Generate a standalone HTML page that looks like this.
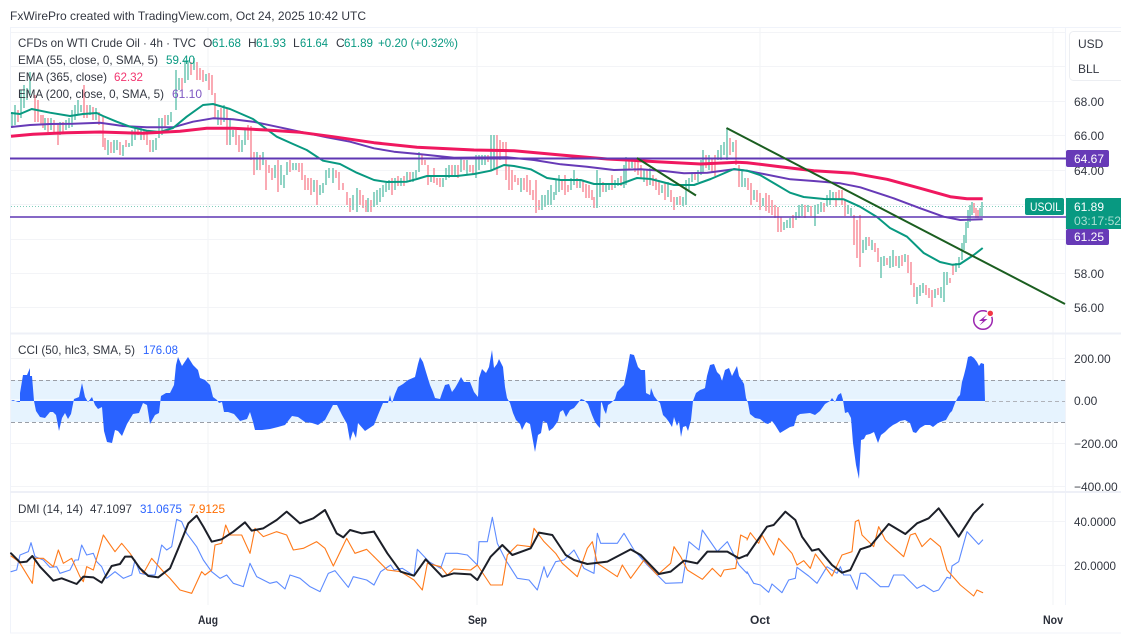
<!DOCTYPE html>
<html><head><meta charset="utf-8"><title>WTI Crude Oil chart</title>
<style>
html,body{margin:0;padding:0;background:#fff}
svg{display:block}
text{font-family:"Liberation Sans",sans-serif;font-size:12px;fill:#333741}
.n{vector-effect:non-scaling-stroke;fill:none;stroke-linejoin:round;stroke-linecap:round}
</style></head><body>
<svg width="1121" height="635" viewBox="0 0 1121 635" xmlns="http://www.w3.org/2000/svg">
<rect width="1121" height="635" fill="#fff"/>

<!-- grid -->
<path d="M208 27V605M477 27V605M760 27V605M1053 27V605" stroke="#f1f3f6" fill="none"/>
<path d="M11 32.5H1065M11 66.5H1065M11 101.5H1065M11 135.5H1065M11 170.5H1065M11 204.5H1065M11 239.5H1065M11 273.5H1065M11 307.5H1065M11 358.5H1065M11 443.5H1065M11 486.5H1065M11 521.5H1065M11 565.5H1065" stroke="#f3f4f7" fill="none"/>
<path d="M10.5 27V633M1065.5 27V605M10 27.5H1121M10 633H1121" stroke="#f0f3fa" fill="none"/>
<path d="M10 333.5H1121M10 492H1121" stroke="#eef0f7" stroke-width="2" fill="none"/>

<!-- CCI band -->
<rect x="11" y="380" width="1054" height="42" fill="#e6f3fe"/>
<path d="M11 380.5H1065M11 422.5H1065" stroke="#9a9ea6" stroke-dasharray="4 3" fill="none"/>
<path d="M985 401.5H1065" stroke="#b0b3ba" stroke-dasharray="4 3" fill="none"/>
<path d="M11 400H985" stroke="#fff" fill="none"/>
<!-- CCI histogram -->
<path fill="#2962ff" d="M11 401L13 400 18 402H20V393L23 375H27L30 368V376H32L34 401 36 411 40 417 45 418 50 412H53L56 415 59 431 62 418 65 413 68 419 71 414 74 399 79 397 82 383 85 397 88 402 92 397 95 405 98 409 102 407 104 431 107 442 112 443 115 430 118 431 122 436 127 424 133 414 139 413 143 403 147 405 150 424 155 415 159 413 161 396 166 393H170L174 385 176 365 178 357 182 366 188 357 193 365 198 370 200 378 205 380 210 385 213 397 217 400 219 403 222 402 224 412H228L234 414 240 421 247 419 250 412 253 422 255 430H262L270 429 278 427 285 425 292 416 298 417 305 422 312 423 318 425 325 420 333 405H337L342 415 347 424 350 441 353 431 356 438 358 423 365 431 374 425 378 415 383 403H388L390 395 392 403 395 394 398 387 403 384 408 380 415 377 418 364 420 357 423 362 426 372 430 385 433 392 435 398 440 399 442 393 445 385 449 384 452 392 455 388 459 381 461 377 464 382H470L474 392 478 397 479 378 482 369 486 373 489 367 492 350 494 368 497 364 499 359 503 367 505 387 507 398 510 403 513 413 516 420 520 424 522 430 526 422 530 424 533 441 535 452 538 435 541 433 543 421 547 423 549 431 553 428 558 421 560 412 563 410 566 417 570 410 574 408 578 403 581 399 584 400 588 404 592 415 595 422 598 426 600 428 601 402 602 403 604 410 606 414 608 405 611 403 615 399 617 392 620 389 624 385 627 371 630 354 634 355 638 367 641 370H645L646 393 650 395 651 388 654 396 657 400 660 403 663 415 666 418 669 422 672 427 674 417 677 426 679 421 681 437 683 427 686 426 688 431 691 420 693 401 696 393 700 390 703 389 705 388 707 376 710 365 714 364 717 372 720 375 722 381 725 370 729 368 732 376 735 370 737 366 739 376 741 379 744 384 746 398 748 403 750 414 755 418 760 419 765 423 768 424 772 421 775 425 780 433 785 430 790 427 794 426 797 416 800 414 810 413 815 415 820 411 825 404 830 401 832 398 835 402 838 395 841 393 843 400 845 413 848 412 851 418 853 443 856 465 859 479 861 440 864 439 866 435 870 434 874 432 878 443 881 435 885 432 889 428 893 425 897 423 900 421 905 420 910 423 913 432 916 433 920 428 925 425H930L933 427 938 423 943 421 946 420 950 413 952 411 955 403 958 397 960 395 962 382 964 375 966 367 968 357 971 356 974 358 977 362 979 366 981 363 984 364 985 401Z"/>

<!-- candles up -->
<path fill="none" stroke="#76cab7" stroke-width="1.6" d="M12 112V128M15 105V125M21 90V118M24 85V108M27 88V100M30 72V95M45 118V130M51 118V130M60 122V135M66 120V130M69 118V128M72 110V127M75 105V120M78 100V115M81 105V112M90 105V115M96 108V120M108 140V155M114 140V153M117 140V150M123 145V156M129 143V147M132 130V146M135 128V140M141 128V140M153 140V152M156 138V150M159 118V138M162 118V135M168 115V125M171 112V122M176 70V110M179 78V90M185 60V83M188 60V80M194 58V70M206 74V81M218 110V125M224 105V122M230 118V145M233 130V137M242 140V152M245 130V145M257 152V170M263 152V165M275 165V178M281 165V185M284 175V188M287 162V175M293 163V170M296 163V170M314 180V192M320 185V195M323 183V193M326 170V185M329 168V178M333 168V183M353 195V210M357 188V212M368 198V212M374 192V207M377 190V205M380 188V202M383 185V197M386 183V192M389 180V190M395 178V190M401 178V186M407 172V182M413 172V182M416 170V178M419 152V172M431 175V182M443 178V187M446 168V180M449 165V178M455 165V175M461 158V172M467 160V175M476 155V178M479 155V170M482 155V165M485 155V165M491 135V170M494 135V170M521 178V192M542 195V210M545 195V207M548 190V205M551 185V205M554 192V200M556 180V195M559 175V192M571 178V190M574 170V185M580 180V188M597 170V208M600 178V197M606 185V192M609 183V190M615 180V188M618 178V186M624 165V188M626 157V185M632 160V168M644 170V182M650 168V185M662 185V193M668 182V197M677 197V205M683 197V206M686 180V205M689 178V190M692 172V182M698 170V182M701 160V175M703 150V172M709 155V170M718 150V160M721 145V160M724 142V155M727 128V160M733 142V152M742 170V187M745 178V187M754 190V200M763 198V206M784 222V230M787 220V228M790 218V228M796 212V220M799 205V218M802 204V216M808 205V212M815 205V226M818 204V214M821 202V212M827 195V206M830 190V205M833 192V200M848 205V214M851 208V216M863 240V253M866 237V250M872 240V250M881 257V278M884 256V266M890 256V268M893 250V267M899 256V268M905 254V262M917 287V304M920 285V296M923 283V293M935 289V298M941 287V298M944 272V302M947 272V285M956 263V272M959 257V268M962 243V260M964 235V250M966 222V243M968 210V228M970 205V222M972 202V215M980 208V216M982 202V216"/>
<!-- candles down -->
<path fill="none" stroke="#f996a2" stroke-width="1.6" d="M18 110V122M35 95V122M38 100V122M41 115V125M43 115V128M48 118V132M54 120V133M58 123V145M63 122V132M84 85V118M87 105V118M93 107V120M99 112V125M103 117V147M105 138V150M111 142V153M120 142V155M126 140V147M138 128V135M144 130V140M147 130V145M150 140V152M165 115V128M182 78V90M191 62V75M197 62V80M200 68V80M203 70V82M209 73V90M212 75V95M215 93V118M221 108V125M227 108V145M236 130V145M239 135V152M248 125V140M251 126V160M254 152V175M260 155V170M266 160V190M269 165V173M272 168V180M278 160V192M290 160V172M299 163V172M302 163V180M305 175V190M308 178V190M311 178V195M317 180V205M336 170V178M339 172V190M343 183V190M347 192V205M350 198V212M360 190V205M363 195V208M366 200V212M371 200V212M392 178V195M398 176V186M404 176V186M410 172V182M422 155V165M425 160V165M428 165V185M434 168V183M437 178V185M440 178V187M452 165V177M458 165V178M464 160V170M470 165V172M473 165V175M488 155V162M497 135V175M500 140V160M503 142V150M506 142V180M509 165V190M512 170V190M515 175V182M518 178V185M524 178V190M527 175V192M530 180V195M533 190V200M536 180V213M539 200V210M562 180V190M565 175V195M568 185V192M577 178V188M583 180V192M586 184V198M589 185V198M592 190V200M594 197V208M603 182V192M612 175V190M621 176V186M629 160V170M635 160V172M638 160V175M641 165V178M647 170V186M653 175V186M656 178V190M659 180V195M665 182V200M671 190V202M674 197V210M680 196V205M695 174V180M706 155V168M712 158V172M715 155V176M730 138V155M736 140V165M739 165V187M748 178V190M751 183V205M757 190V202M760 193V210M766 193V211M769 195V213M772 200V215M775 205V218M778 207V232M781 217V232M793 215V228M805 205V218M811 206V216M824 203V212M836 192V207M839 190V200M842 190V205M845 200V216M854 215V245M857 220V258M860 215V267M869 237V246M875 243V252M878 248V262M887 258V265M896 256V266M902 255V266M908 255V273M911 262V285M914 283V297M926 285V295M929 288V298M932 290V307M938 288V295M950 278V283M953 265V275M974 203V213M976 208V218M978 210V218"/>

<!-- dotted last price -->
<path d="M11 206.5H1026" stroke="#7fcdbb" stroke-dasharray="1 2" fill="none"/>

<!-- EMAs -->
<polyline fill="none" stroke="#673ab7" stroke-width="2" stroke-linejoin="round" points="11,127 30,125 50,124 73,123.7 100,122.7 123,126 146.7,127.3 173,127.3 193,121.7 213,118.3 233,119.3 253,121.7 276.7,126.7 300,131.7 326.7,137.3 350,141.7 374,148.3 394,151.7 420.7,154.3 454,157.7 507,157.3 534,160 560.7,164.3 587,166.7 614,170 640.7,169.3 664,171 684,173.3 707.3,172.7 734,169.3 747,170.7 763.7,174 790.3,179.3 813.7,181 840.3,183.3 860.3,187.3 893.7,198.3 920.3,208.3 943.7,216.7 960.3,220 982.7,219.3"/>
<polyline fill="none" stroke="#089981" stroke-width="2" stroke-linejoin="round" points="11,113 20,114 31.7,109 50,112.7 70,116 83,114 96.7,113 103,116 116.7,121.7 130,126.7 146.7,130.7 160,132 173,128 186.7,116.7 203,105 213,104 230,109 253,119 276.7,136.7 293,144 306.7,150 323,160.7 340,164 356.7,172.7 374,180 387,182 407,181.7 417,179 427,176 457,176 474,174 490.7,170.7 504,165 514,166 530.7,169.3 547,178 560.7,180 580.7,180 594,184 620.7,184 637,178 650.7,179 674,185 694,185 710.7,179 734,169 747,170.7 760,175 777,185 790,192.7 803.7,197 824,199 843.7,199.3 860,206.7 877,217 890,228 907,236.7 923.7,253 940,262 952,264.7 960,264 973.7,255 982.7,248"/>
<polyline fill="none" stroke="#f0185f" stroke-width="3" stroke-linejoin="round" points="11,136.3 33,134.3 66.7,132.7 100,132 143,133.3 180,131.3 206.7,128.3 233,128.3 266.7,130 300,132.3 333,136.7 374,142.7 417,147.3 474,150 514,150.7 560.7,155 607.3,159 657,161.7 700.7,164 737.3,162.3 747,162.7 780,166.7 813.7,170.7 853.7,173.3 887,179.3 920.3,188.3 950.3,196.7 967,198.7 982.7,198.7"/>

<!-- horizontal levels -->
<path d="M10 158.5H1066" stroke="#5f37b3" stroke-width="2" fill="none"/>
<path d="M10 217H1066" stroke="#5f37b3" stroke-width="1.6" fill="none"/>
<!-- trendlines -->
<path d="M637 158L696 195.5M726.5 128L1065 304" stroke="#1b5e20" stroke-width="2" fill="none"/>

<!-- bolt icon -->
<circle cx="983" cy="320" r="9.3" fill="#fff" stroke="#9c27b0" stroke-width="1.5"/>
<path d="M987 314.5L979 321H983L979.5 325.5L987.5 319H983.5Z" fill="#9c27b0"/>
<circle cx="990.3" cy="313.3" r="3.8" fill="#fff"/><circle cx="990.3" cy="313.3" r="2.7" fill="#f23645"/>

<!-- DMI -->
<g transform="translate(0,490) scale(.33333)">
<polyline class="n" stroke="#5d8bff" stroke-width="1.1" points="33,245 50,240 60,195 85,185 93,158 105,200 130,210 150,232 170,230 180,250 210,240 225,210 235,210 245,165 260,195 280,190 290,215 305,230 320,265 345,245 370,265 395,255 405,210 420,250 445,255 465,255 485,165 500,180 515,170 530,88 545,95 560,130 590,170 610,210 635,245 660,265 680,255 700,280 730,290 750,220 770,260 810,280 830,275 855,297 870,255 900,265 930,290 960,305 985,250 1005,242 1045,292 1060,260 1100,270 1122,285"/>
<polyline class="n" stroke="#ff7a1a" stroke-width="1.1" points="33,198 50,210 60,220 97,280 105,205 130,205 160,230 175,180 190,220 215,205 240,260 250,275 260,230 280,240 310,135 345,185 365,160 390,190 430,250 455,205 490,245 510,265 540,300 575,310 605,245 615,255 635,240 645,165 665,160 677,105 690,135 725,135 750,190 765,115 790,140 830,125 860,135 880,180 910,175 950,155 975,175 1000,228 1040,145 1065,190 1100,178 1122,200"/>
<polyline class="n" stroke="#1c1f28" stroke-width="2" points="33,190 60,217 80,215 97,198 120,230 160,272 185,265 230,282 250,260 280,262 305,278 335,228 360,222 375,200 395,200 420,235 445,258 475,262 510,235 535,175 565,100 590,77 610,110 635,155 665,148 700,125 735,97 755,122 790,115 830,90 860,65 900,100 940,85 975,60 1010,130 1030,142 1050,120 1085,130 1122,125"/>
</g>
<g transform="translate(374,490) scale(.33333)">
<polyline class="n" stroke="#5d8bff" stroke-width="1.1" points="0,285 20,245 50,225 60,240 85,235 120,257 130,178 165,215 200,235 215,190 250,190 280,195 310,225 315,155 340,155 355,82 370,160 395,210 430,265 465,270 490,300 510,230 520,262 545,215 570,210 600,180 630,235 660,250 670,130 680,160 730,160 750,130 780,180 820,225 875,280 925,278 945,155 975,180 985,120 1030,185 1060,155 1095,225 1119,250"/>
<polyline class="n" stroke="#ff7a1a" stroke-width="1.1" points="0,200 40,240 80,245 120,270 145,300 160,220 200,230 220,255 240,237 290,240 310,225 350,285 385,285 400,195 430,165 470,170 480,115 510,155 545,190 565,220 610,260 640,175 655,155 670,220 730,260 745,225 770,265 810,210 850,255 890,220 900,170 920,200 940,240 985,268 1015,235 1040,260 1050,240 1085,235 1100,135 1119,145"/>
<polyline class="n" stroke="#1c1f28" stroke-width="2" points="0,125 40,190 80,245 120,257 155,208 205,260 240,250 290,253 310,270 350,200 385,165 415,195 470,175 495,128 535,135 575,195 600,210 640,222 700,215 770,178 800,195 855,252 890,245 930,212 970,220 1000,185 1060,185 1095,205 1119,195"/>
</g>
<g transform="translate(747,490) scale(.33333)">
<polyline class="n" stroke="#5d8bff" stroke-width="1.1" points="0,245 20,280 40,285 65,307 75,282 105,308 125,270 145,265 150,232 185,258 210,280 240,230 270,250 280,230 290,255 310,255 330,298 340,250 355,250 400,290 425,290 440,255 470,255 510,295 530,285 560,305 575,300 600,262 610,265 615,228 635,215 660,125 695,163 707,150"/>
<polyline class="n" stroke="#ff7a1a" stroke-width="1.1" points="0,150 10,128 35,160 45,135 80,195 95,145 135,190 150,225 170,212 190,235 205,192 255,258 285,195 315,185 325,95 335,90 345,135 380,170 395,110 415,150 470,200 490,135 505,130 525,170 550,145 580,170 600,240 640,285 680,318 690,300 707,308"/>
<polyline class="n" stroke="#1c1f28" stroke-width="2" points="0,197 60,110 80,105 115,65 145,90 165,140 195,182 215,177 255,225 285,248 310,240 340,178 370,168 425,102 475,132 510,100 545,85 575,55 600,90 635,140 680,70 707,43"/>
</g>

<!-- header -->
<text x="10" y="20" textLength="356" lengthAdjust="spacingAndGlyphs">FxWirePro created with TradingView.com, Oct 24, 2025 10:42 UTC</text>

<!-- legend -->
<text x="18" y="47" textLength="178" lengthAdjust="spacingAndGlyphs">CFDs on WTI Crude Oil · 4h · TVC</text>
<text x="203" y="47">O</text><text x="212" y="47" textLength="29" lengthAdjust="spacingAndGlyphs" style="fill:#089981">61.68</text>
<text x="248" y="47">H</text><text x="256" y="47" textLength="30" lengthAdjust="spacingAndGlyphs" style="fill:#089981">61.93</text>
<text x="293" y="47">L</text><text x="300" y="47" textLength="28" lengthAdjust="spacingAndGlyphs" style="fill:#089981">61.64</text>
<text x="336" y="47">C</text><text x="344" y="47" textLength="29" lengthAdjust="spacingAndGlyphs" style="fill:#089981">61.89</text>
<text x="378" y="47" textLength="80" lengthAdjust="spacingAndGlyphs" style="fill:#089981">+0.20 (+0.32%)</text>
<text x="18" y="64" textLength="140" lengthAdjust="spacingAndGlyphs">EMA (55, close, 0, SMA, 5)</text>
<text x="166" y="64" textLength="29" lengthAdjust="spacingAndGlyphs" style="fill:#089981">59.40</text>
<text x="18" y="81" textLength="89" lengthAdjust="spacingAndGlyphs">EMA (365, close)</text>
<text x="114" y="81" textLength="29" lengthAdjust="spacingAndGlyphs" style="fill:#f23670">62.32</text>
<text x="18" y="98" textLength="146" lengthAdjust="spacingAndGlyphs">EMA (200, close, 0, SMA, 5)</text>
<text x="172" y="98" textLength="30" lengthAdjust="spacingAndGlyphs" style="fill:#7e57c2">61.10</text>
<text x="18" y="354" textLength="117" lengthAdjust="spacingAndGlyphs">CCI (50, hlc3, SMA, 5)</text>
<text x="143" y="354" textLength="35" lengthAdjust="spacingAndGlyphs" style="fill:#2962ff">176.08</text>
<text x="18" y="513" textLength="65" lengthAdjust="spacingAndGlyphs">DMI (14, 14)</text>
<text x="90" y="513" textLength="42" lengthAdjust="spacingAndGlyphs">47.1097</text>
<text x="140" y="513" textLength="42" lengthAdjust="spacingAndGlyphs" style="fill:#2962ff">31.0675</text>
<text x="189" y="513" textLength="36" lengthAdjust="spacingAndGlyphs" style="fill:#ff6d00">7.9125</text>

<!-- currency box -->
<rect x="1069.5" y="31.5" width="60" height="49" rx="4" fill="#fff" stroke="#eceef2"/>
<text x="1078" y="48">USD</text>
<text x="1078" y="73">BLL</text>

<!-- price axis -->
<text x="1074" y="106">68.00</text>
<text x="1074" y="140">66.00</text>
<text x="1074" y="175">64.00</text>
<text x="1074" y="278">58.00</text>
<text x="1074" y="312">56.00</text>
<text x="1074" y="363">200.00</text>
<text x="1074" y="405">0.00</text>
<text x="1074" y="448">−200.00</text>
<text x="1074" y="491">−400.00</text>
<text x="1074" y="526" textLength="42" lengthAdjust="spacingAndGlyphs">40.0000</text>
<text x="1074" y="570" textLength="42" lengthAdjust="spacingAndGlyphs">20.0000</text>

<!-- price tags -->
<rect x="1066" y="150" width="43" height="17" rx="2" fill="#673ab7"/>
<text x="1074" y="163" style="fill:#fff">64.67</text>
<rect x="1066" y="198" width="55" height="31" fill="#089981"/>
<text x="1074" y="211" style="fill:#fff">61.89</text>
<text x="1074" y="225" style="fill:#a9dfd3" textLength="47" lengthAdjust="spacingAndGlyphs">03:17:52</text>
<rect x="1066" y="229" width="43" height="16" rx="2" fill="#673ab7"/>
<text x="1074" y="241" style="fill:#fff">61.25</text>
<rect x="1025" y="198" width="39" height="17" rx="2" fill="#089981"/>
<text x="1030" y="211" textLength="31" lengthAdjust="spacingAndGlyphs" style="fill:#fff">USOIL</text>

<!-- time axis -->
<text x="198" y="624" textLength="20" lengthAdjust="spacingAndGlyphs" style="font-weight:bold;fill:#2a2e39">Aug</text>
<text x="468" y="624" textLength="19" lengthAdjust="spacingAndGlyphs" style="font-weight:bold;fill:#2a2e39">Sep</text>
<text x="750" y="624" textLength="20" lengthAdjust="spacingAndGlyphs" style="font-weight:bold;fill:#2a2e39">Oct</text>
<text x="1043" y="624" textLength="20" lengthAdjust="spacingAndGlyphs" style="font-weight:bold;fill:#2a2e39">Nov</text>
</svg>
</body></html>
